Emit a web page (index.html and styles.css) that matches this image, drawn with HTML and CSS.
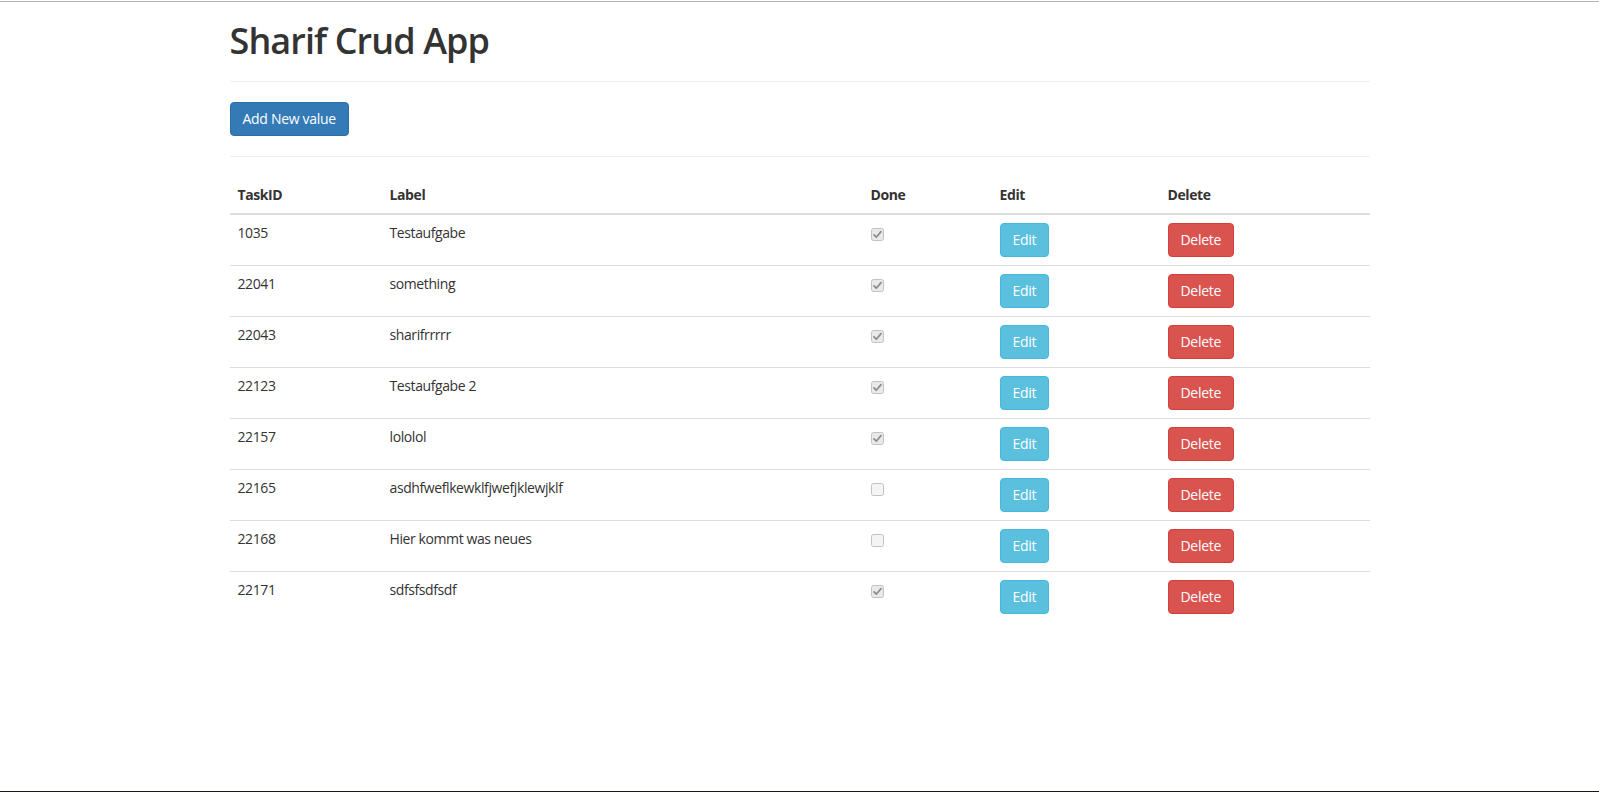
FILE: index.html
```html
<!DOCTYPE html>
<html lang="en">
<head>
<meta charset="utf-8">
<title>Sharif Crud App</title>
<link rel="stylesheet" href="styles.css">
</head>
<body>
<div class="topline"></div>
<div class="container">
  <h1 class="title">Sharif Crud App</h1>
  <hr class="rule">
  <button class="btn btn-primary" type="button">Add New value</button>
  <hr class="rule">
  <table class="table">
    <colgroup>
      <col class="w-id"><col class="w-label"><col class="w-done"><col class="w-edit"><col class="w-del">
    </colgroup>
    <thead>
      <tr><th>TaskID</th><th>Label</th><th>Done</th><th>Edit</th><th>Delete</th></tr>
    </thead>
    <tbody>
      <tr><td>1035</td><td>Testaufgabe</td><td><span class="cb"><svg width="13" height="13" viewBox="0 0 13 13"><rect x="0.5" y="0.5" width="12" height="12" rx="2" class="cb-box"/><path d="M3 6.8 L5.3 9.2 L10 3.6" class="cb-mark"/></svg></span></td><td><button class="btn btn-info" type="button">Edit</button></td><td><button class="btn btn-danger" type="button">Delete</button></td></tr>
      <tr><td>22041</td><td>something</td><td><span class="cb"><svg width="13" height="13" viewBox="0 0 13 13"><rect x="0.5" y="0.5" width="12" height="12" rx="2" class="cb-box"/><path d="M3 6.8 L5.3 9.2 L10 3.6" class="cb-mark"/></svg></span></td><td><button class="btn btn-info" type="button">Edit</button></td><td><button class="btn btn-danger" type="button">Delete</button></td></tr>
      <tr><td>22043</td><td>sharifrrrrr</td><td><span class="cb"><svg width="13" height="13" viewBox="0 0 13 13"><rect x="0.5" y="0.5" width="12" height="12" rx="2" class="cb-box"/><path d="M3 6.8 L5.3 9.2 L10 3.6" class="cb-mark"/></svg></span></td><td><button class="btn btn-info" type="button">Edit</button></td><td><button class="btn btn-danger" type="button">Delete</button></td></tr>
      <tr><td>22123</td><td>Testaufgabe 2</td><td><span class="cb"><svg width="13" height="13" viewBox="0 0 13 13"><rect x="0.5" y="0.5" width="12" height="12" rx="2" class="cb-box"/><path d="M3 6.8 L5.3 9.2 L10 3.6" class="cb-mark"/></svg></span></td><td><button class="btn btn-info" type="button">Edit</button></td><td><button class="btn btn-danger" type="button">Delete</button></td></tr>
      <tr><td>22157</td><td>lololol</td><td><span class="cb"><svg width="13" height="13" viewBox="0 0 13 13"><rect x="0.5" y="0.5" width="12" height="12" rx="2" class="cb-box"/><path d="M3 6.8 L5.3 9.2 L10 3.6" class="cb-mark"/></svg></span></td><td><button class="btn btn-info" type="button">Edit</button></td><td><button class="btn btn-danger" type="button">Delete</button></td></tr>
      <tr><td>22165</td><td>asdhfweflkewklfjwefjklewjklf</td><td><span class="cb"><svg width="13" height="13" viewBox="0 0 13 13"><rect x="0.5" y="0.5" width="12" height="12" rx="2" class="cb-box cb-empty"/></svg></span></td><td><button class="btn btn-info" type="button">Edit</button></td><td><button class="btn btn-danger" type="button">Delete</button></td></tr>
      <tr><td>22168</td><td>Hier kommt was neues</td><td><span class="cb"><svg width="13" height="13" viewBox="0 0 13 13"><rect x="0.5" y="0.5" width="12" height="12" rx="2" class="cb-box cb-empty"/></svg></span></td><td><button class="btn btn-info" type="button">Edit</button></td><td><button class="btn btn-danger" type="button">Delete</button></td></tr>
      <tr><td>22171</td><td>sdfsfsdfsdf</td><td><span class="cb"><svg width="13" height="13" viewBox="0 0 13 13"><rect x="0.5" y="0.5" width="12" height="12" rx="2" class="cb-box"/><path d="M3 6.8 L5.3 9.2 L10 3.6" class="cb-mark"/></svg></span></td><td><button class="btn btn-info" type="button">Edit</button></td><td><button class="btn btn-danger" type="button">Delete</button></td></tr>
    </tbody>
  </table>
</div>
</body>
</html>
```

FILE: styles.css
```css
* { box-sizing: border-box; }

html, body {
  margin: 0;
  padding: 0;
  background: #fff;
}

body {
  font-family: "Open Sans", "Noto Sans", sans-serif;
  font-size: 14px;
  line-height: 1.42857143;
  color: #333;
  letter-spacing: -0.4px;
}

body::after {
  content: "";
  position: fixed;
  left: 0;
  right: 0;
  bottom: 0;
  height: 1px;
  background: #141a10;
}

.topline {
  margin-top: 1px;
  height: 1px;
  background: #b4b4b4;
}

.container {
  width: 1170px;
  margin: 0 auto;
  padding: 0 15px;
}

.title {
  margin: 19px 0 10px;
  font-size: 36px;
  font-weight: 600;
  line-height: 1.1;
  color: #333;
  letter-spacing: -0.9px;
}

.rule {
  margin: 20px 0;
  border: 0;
  border-top: 1px solid #eee;
  height: 0;
}

.btn {
  display: inline-block;
  padding: 6px 12px;
  margin: 0;
  font-family: inherit;
  font-size: 14px;
  line-height: 1.42857143;
  letter-spacing: -0.3px;
  color: #fff;
  border: 1px solid transparent;
  border-radius: 4px;
  vertical-align: middle;
  cursor: pointer;
}

.btn-primary { background: #337ab7; border-color: #2e6da4; }
.btn-info { background: #5bc0de; border-color: #46b8da; }
.btn-danger { background: #d9534f; border-color: #d43f3a; }

.table {
  width: 100%;
  border-collapse: collapse;
  border-spacing: 0;
  table-layout: fixed;
  margin-bottom: 20px;
}

.w-id { width: 152px; }
.w-label { width: 481px; }
.w-done { width: 129px; }
.w-edit { width: 168px; }
.w-del { width: 210px; }

.table th {
  text-align: left;
  font-weight: 700;
  padding: 8px;
  vertical-align: bottom;
  border-bottom: 2px solid #ddd;
  line-height: 1.42857143;
}

.table td {
  padding: 8px;
  vertical-align: top;
  border-top: 1px solid #ddd;
  line-height: 1.42857143;
}

.cb {
  display: block;
  width: 13px;
  height: 13px;
  margin-top: 5px;
}

.cb svg { display: block; }

.cb-box {
  fill: #e9e9e9;
  stroke: #c2c2c2;
  stroke-width: 1;
}

.cb-empty { fill: #f4f4f4; }

.cb-mark {
  fill: none;
  stroke: #8c8c8c;
  stroke-width: 1.7;
  stroke-linecap: round;
  stroke-linejoin: round;
}
```
